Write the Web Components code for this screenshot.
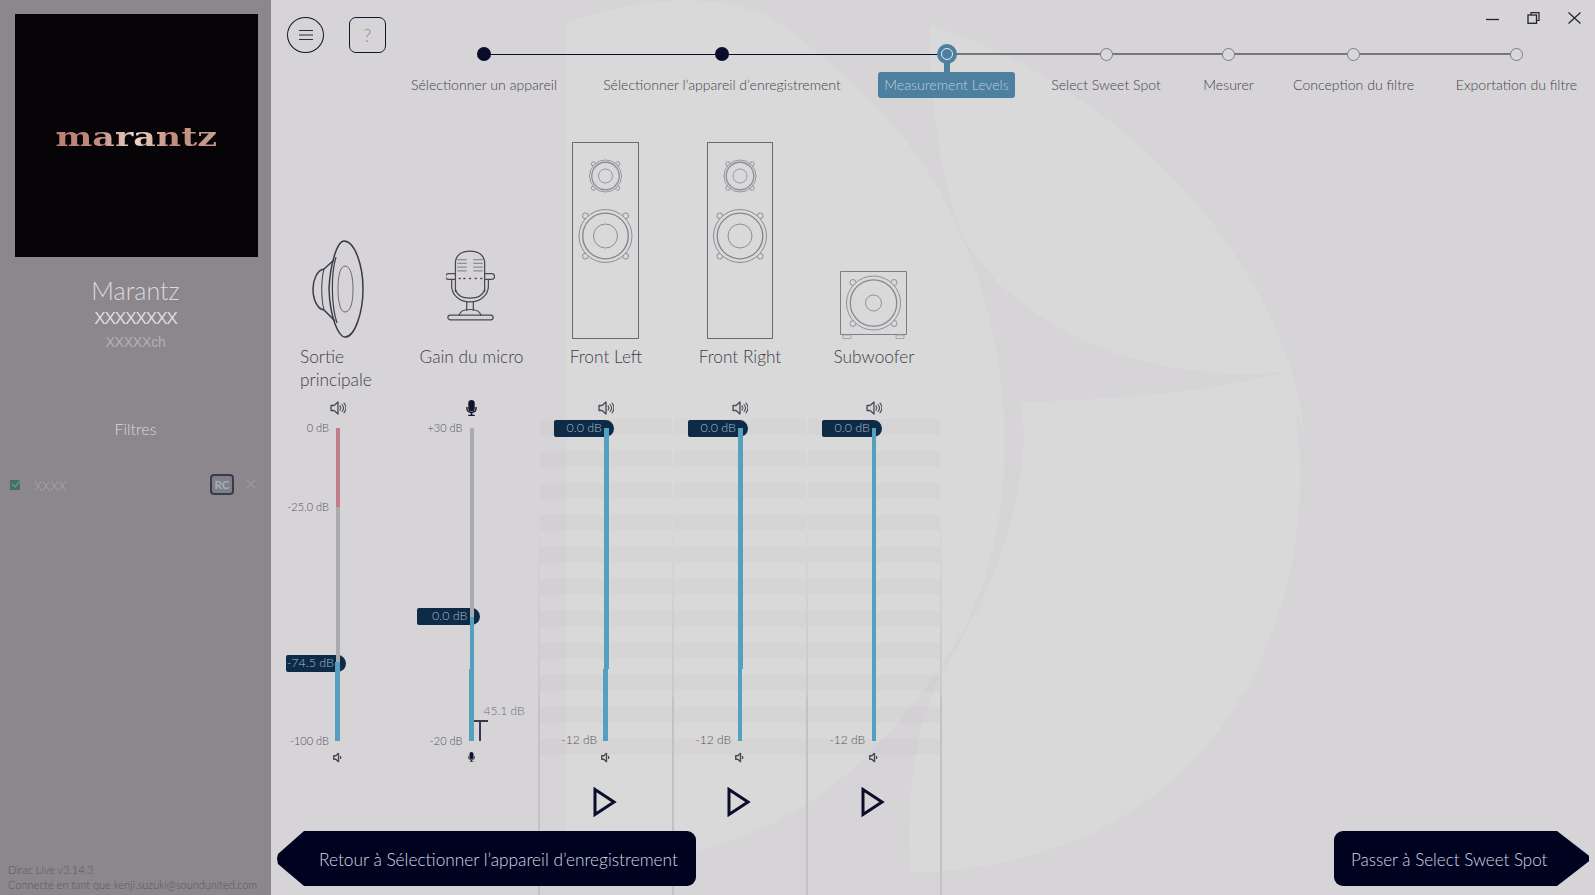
<!DOCTYPE html>
<html lang="fr"><head><meta charset="utf-8"><title>Dirac Live</title>
<style>
html,body{margin:0;padding:0;width:1595px;height:895px;overflow:hidden;background:#d6d4d7;font-family:Lato,"Noto Sans",sans-serif}
</style></head><body>
<dirac-app>
  <app-sidebar slot="side"></app-sidebar>
  <app-main slot="main">
    <app-header></app-header>
    <channel-row>
      <audio-channel kind="horn" label="Sortie principale" icon="spk" top="0 dB" bottom="-100 dB" mid="-25.0 dB" midpos="78.5" value="-74.5 dB" valpos="235" handlew="60"
        segs="#c07f88:78.5:0:4;#abaaad:155.5:0:4;#559fbf:79:-1:5"></audio-channel>
      <audio-channel kind="mic" label="Gain du micro" icon="mic" top="+30 dB" bottom="-20 dB" value="0.0 dB" valpos="188" handlew="63" meter="45.1 dB"
        segs="#abaaad:189:0:4;#559fbf:52:0:4;#559fbf:72:-1:5"></audio-channel>
      <audio-channel striped kind="tower" label="Front Left" icon="spk" bottom="-12 dB" big value="0.0 dB" valpos="0" handlew="60" play
        segs="#559fbf:241:0:4.5;#559fbf:72:-1:4.5"></audio-channel>
      <audio-channel striped kind="tower" label="Front Right" icon="spk" bottom="-12 dB" big value="0.0 dB" valpos="0" handlew="60" play
        segs="#559fbf:241:0:4.5;#559fbf:72:-.5:4.5"></audio-channel>
      <audio-channel striped last kind="sub" label="Subwoofer" icon="spk" bottom="-12 dB" big value="0.0 dB" valpos="0" handlew="60" play
        segs="#559fbf:313:0:4"></audio-channel>
    </channel-row>
    <nav-footer></nav-footer>
  </app-main>
</dirac-app>
<script>
const LABEL='Lato,"Noto Sans",sans-serif';
function def(name,cls){customElements.define(name,cls)}
function drv(cx,cy,r,ri,ears,col){
  let e='';
  if(ears) for(const [a,b] of [[-1,-1],[1,-1],[-1,1],[1,1]]){
    const x=cx+a*r*.76,y=cy+b*r*.76;
    e+=`<circle cx="${x}" cy="${y}" r="${r*.08+.8}"/>`;
  }
  return `<g fill="none" stroke="${col}" stroke-width=".9">${e}
  <circle cx="${cx}" cy="${cy}" r="${r}" fill="#d9d9d9"/><circle cx="${cx}" cy="${cy}" r="${r*.86}" stroke-width="1.3"/>
  <circle cx="${cx}" cy="${cy}" r="${ri}"/></g>`;
}
const ART={
 horn:()=>`<svg width="54" height="100" viewBox="0 0 54 100" style="display:block"><g fill="none" stroke="#3d3b4a" stroke-width="1.5" stroke-linejoin="round">
  <path d="M33 2C44 2 52 27 52 50C52 73 44 98 34 98C28 98 19 80 18 50C19 26 26 2 33 2Z"/>
  <path d="M25 18C20 34 20 66 26 84" stroke-width="1.2"/>
  <path d="M23 21L13 30C6 31 2 41 2 50C2 60 6 70 13 71L24 82" />
  <path d="M13 30C10 40 10 60 13 71" stroke-width="1"/>
  <path d="M34 27C40 27 42 39 42 50C42 62 40 73 34 73C29 73 27 62 27 50C27 38 29 27 34 27Z" stroke="#6c6a76" stroke-width="1"/></g></svg>`,
 mic:()=>`<svg width="49" height="76" viewBox="0 0 52 78" style="display:block;margin-bottom:16px;margin-right:2px"><g fill="none" stroke="#4a4856" stroke-width="1.3" stroke-linecap="round">
  <path d="M10 46V16C10 7 17 3 25.500 3C34 3 41 7 41 16V46"/><path d="M10 27H2.500a1.500 1.500 0 0 0 0 6H10M41 27H48.500a1.500 1.500 0 0 1 0 6H41"/>
  <path d="M6 33V40C6 50 15 57 25.500 57C36 57 45 50 45 40V33"/><path d="M10 44C12 50 18 53 25.500 53C33 53 39 50 41 44"/>
  <path d="M22 57V66M29 57V66"/><path d="M14 71C15 66 20 65 25.500 65C31 65 36 66 37 71"/>
  <rect x="2" y="71" width="48" height="5" rx="2.500"/>
  <path d="M12 12H22M29 12H39M12 16H22M29 16H39M12 20H22M29 20H39M12 24H22M29 24H39" stroke="#8d8b94" stroke-linecap="butt"/>
  <path d="M14 32h1M19 32h1M25 32h1M31 32h1M37 32h1" stroke-width="1.600"/></g></svg>`,
 tower:(w,mr)=>`<svg width="${w}" height="197" viewBox="0 0 ${w} 197" style="display:block;margin-right:${mr}px"><rect x=".5" y=".5" width="${w-1}" height="196" fill="none" stroke="#6c6a78" stroke-width="1"/>${drv(w/2,34,16,7,true,'#8f8d97')}${drv(w/2,94,26.5,12,true,'#84828c')}</svg>`,
 sub:()=>`<svg width="67" height="68" viewBox="0 0 67 68" style="display:block;margin-right:1px"><path d="M.5 .5H66.500V63.500H.5Z" fill="none" stroke="#7f7d89"/><path d="M3 64h8v3.500H3ZM56 64h8v3.500H56Z" fill="none" stroke="#9a98a2" stroke-width=".8"/>${drv(33.5,32,27,8,true,'#8a8892')}</svg>`
};
const SPK=(s,waves)=>`<svg width="${s}" height="${s}" viewBox="0 0 16 16" style="display:block"><path d="M1 5.500H4L8 2V14L4 10.500H1Z" fill="#d6d4d7" stroke="#4a4854" stroke-width="${waves?1.3:2}" stroke-linejoin="round"/>${waves?'<path d="M10 6C11 7 11 9 10 10M12 4.500C13.800 6.500 13.800 9.500 12 11.500M14 3C16.300 6 16.300 10 14 13" fill="none" stroke="#4a4854" stroke-width="1.100" stroke-linecap="round"/>':'<path d="M10.500 6C11.500 7 11.500 9 10.500 10" fill="none" stroke="#3c3a46" stroke-width="1.800"/>'}</svg>`;
const MIC=(s)=>`<svg width="${s}" height="${s*1.500}" viewBox="0 0 12 18" style="display:block"><rect x="2.500" y="0" width="7" height="12.500" rx="3.500" fill="#12142b"/><path d="M1 7.500V9C1 12 3 13.500 6 13.500C9 13.500 11 12 11 9V7.500" fill="none" stroke="#12142b" stroke-width="1.500"/><path d="M6 13.500V16M2.500 17H9.500" stroke="#12142b" stroke-width="1.800"/></svg>`;

def('level-fader',class extends HTMLElement{constructor(){super();this.attachShadow({mode:'open'})}
 build(){const g=a=>this.getAttribute(a);const big=this.hasAttribute('big');
 const segs=g('segs').split(';').map(s=>{const [c,h,l,w]=s.split(':');return `<i style="background:${c};height:${h}px;margin-left:${l}px;width:${w}px"></i>`}).join('');
 const hw=+g('handlew');
 this.shadowRoot.innerHTML=`<style>
 :host{display:block;position:relative;height:336px;font-family:${LABEL};}
 .bar{position:absolute;left:50%;margin-left:-2px;top:9px;width:4px;height:313px;display:flex;flex-direction:column;z-index:2}
 .bar i{display:block;flex:none}
 .sc{position:absolute;right:calc(50% + 9px);font:300 ${big?12:11}px/14px ${LABEL};color:#55535e;white-space:nowrap;transform:translateY(-50%)}
 .h{position:absolute;left:calc(50% + 8px - ${hw}px);width:${hw}px;height:17px;background:#0d2a47;border-radius:2px 9px 9px 2px;color:#a9bac9;font:300 12.500px/15px ${LABEL};box-sizing:border-box;z-index:1;white-space:nowrap;text-align:right;padding-right:12px}
 .m{position:absolute;left:calc(50% + 12px);top:${712-420}px;transform:translateY(-50%);font:300 12px/14px ${LABEL};color:#6c6a76;white-space:nowrap}
 .t{position:absolute;left:calc(50% + 0px);top:${721-420}px;width:17px;height:21px;}
 .t::before{content:"";position:absolute;left:0;top:0;width:16px;height:2px;background:#3a3850}
 .t::after{content:"";position:absolute;left:7px;top:0;width:2px;height:21px;background:#3a3850}
 </style>
 ${g('top')?`<div class="sc" style="top:9px">${g('top')}</div>`:''}
 ${g('mid')?`<div class="sc" style="top:${9+ +g('midpos')}px">${g('mid')}</div>`:''}
 ${g('bottom')?`<div class="sc" style="top:${big?321:322}px">${g('bottom')}</div>`:''}
 <div class="h" style="top:${+g('valpos')+1}px">${g('value')}</div>
 <div class="bar">${segs}</div>
 ${g('meter')?`<div class="m">${g('meter')}</div><div class="t"></div>`:''}`;
 }});

def('dirac-app',class extends HTMLElement{constructor(){super();this.attachShadow({mode:'open'}).innerHTML=`<style>
 :host{display:grid;grid-template-columns:271px 1fr;width:1595px;height:895px;position:relative;overflow:hidden}
 svg{position:absolute;left:0;top:0;z-index:0}
 ::slotted(*){position:relative;z-index:1}
 </style>
 <svg width="1595" height="895" viewBox="0 0 1595 895" fill="#d9d9d9" aria-hidden="true">
  <path d="M566 22C660 -8 740 -8 790 30C860 85 930 150 965 245C1012 350 1032 540 940 667C870 770 790 830 697 850C650 862 600 868 566 870Z"/>
  <path d="M930 25C1130 90 1290 270 1305 440L1285 372C1140 385 1012 325 962 235C940 180 930 100 930 25Z"/>
  <path d="M1285 372C1310 440 1305 560 1265 650C1215 770 1100 870 910 872C905 800 915 720 945 667C1000 585 1035 470 1020 402C1100 400 1200 395 1285 372Z"/>
 </svg><slot name="side"></slot><slot name="main"></slot>`}});

def('app-sidebar',class extends HTMLElement{constructor(){super();this.attachShadow({mode:'open'}).innerHTML=`<style>
 :host{display:flex;flex-direction:column;background:#8b878c;height:895px;color:#dbd9db;font-family:${LABEL};font-weight:300;box-sizing:border-box}
 .logo{margin:14px 13px 0 15px;height:243px;background:#060406;display:flex;align-items:center;justify-content:center}
 .mk{font:700 26px "DejaVu Serif",serif;transform:scaleX(1.34) translateY(1px);background:linear-gradient(90deg,#bb7f75,#c08a7e 25%,#ecd5c8 50%,#c28c80 72%,#c99c90);-webkit-background-clip:text;background-clip:text;color:transparent}
 .c{text-align:center}
 .n1{font-size:25px;line-height:30px;margin-top:18px}
 .n2{font-size:17px;line-height:22px;margin-top:3px;font-family:"Liberation Sans",sans-serif;letter-spacing:-1px;color:#dfdddf}
 .n3{font-size:14px;line-height:20px;margin-top:2px;color:#b4b1b4;font-family:"Liberation Sans",sans-serif;letter-spacing:-.2px}
 .f{font-size:16px;line-height:20px;margin-top:67px}
 .row{display:flex;align-items:center;margin:34px 0 0 10px;height:22px;width:247px}
 .x4{margin-left:12px;font-size:13px;color:#aaa6aa;margin-top:4px}
 .rc{margin-left:auto;width:20px;height:17px;border:2px solid #3c3a48;border-radius:4px;background:#7d808b;color:#a9aeb4;font:700 11.500px ${LABEL};display:flex;align-items:center;justify-content:center}
 .xx{margin-left:11px;width:12px;display:block}
 .foot{margin-top:auto;padding:0 0 3px 8px;font-size:11px;line-height:15px;color:#5a565b;letter-spacing:-.03px}
 </style>
 <div class="logo"><span class="mk">marantz</span></div>
 <div class="c n1">Marantz</div><div class="c n2">XXXXXXXX</div><div class="c n3">XXXXXch</div>
 <div class="c f">Filtres</div>
 <div class="row"><svg width="12" height="11" viewBox="0 0 12 11"><rect x="0" y="1" width="10" height="10" fill="#4b6c69"/><path d="M2 5L5 8L11 1" fill="none" stroke="#5d9b88" stroke-width="1.500"/></svg><span class="x4">XXXX</span><span class="rc">RC</span>
 <svg class="xx" width="12" height="12" viewBox="0 0 12 12"><path d="M1.500 1.500L10.500 10.500M10.500 1.500L1.500 10.500" stroke="#9b979b" stroke-width="1.400"/></svg></div>
 <div class="foot">Dirac Live v3.14.3<br>Connecté en tant que kenji.suzuki@soundunited.com</div>`}});

def('app-main',class extends HTMLElement{constructor(){super();this.attachShadow({mode:'open'}).innerHTML=`<style>
 :host{display:flex;flex-direction:column;height:895px;position:relative;overflow:hidden;color:#3a3846;font-family:${LABEL}}
 </style><slot></slot>`}});

def('app-header',class extends HTMLElement{constructor(){super();this.attachShadow({mode:'open'}).innerHTML=`<style>
 :host{display:flex;height:140px;flex:none;box-sizing:border-box}
 .tools{display:flex;gap:25px;padding:17px 0 0 16px;width:123px;box-sizing:content-box;align-items:flex-start}
 .b{width:37px;height:36px;box-sizing:border-box;border:1.600px solid #14142c;display:flex;align-items:center;justify-content:center;color:#8b8b92;font:300 18px ${LABEL}}
 .b.r{border-radius:50%}.b.s{border-radius:7px}
 .rt{display:flex;flex-direction:column}
 .win{height:44px;display:flex;justify-content:flex-end;align-items:flex-start;gap:28px;padding:12px 14px 0 0;box-sizing:border-box;width:1185px}
 .win svg{display:block}
 </style>
 <div class="tools"><div class="b r"><svg width="16" height="12" viewBox="0 0 16 12"><path d="M1 1.500H15M1 6H15M1 10.500H15" stroke="#2d2c3c" stroke-width="1.200"/></svg></div><div class="b s">?</div></div>
 <div class="rt"><div class="win">
  <svg width="13" height="12" viewBox="0 0 13 12"><path d="M0 7.500H13" stroke="#222230" stroke-width="1.300"/></svg>
  <svg width="13" height="12" viewBox="0 0 13 12"><path d="M4 3V.7H12V8.500H9.500" fill="none" stroke="#222230" stroke-width="1.200"/><rect x="1" y="3" width="8.500" height="8.300" fill="none" stroke="#222230" stroke-width="1.300"/></svg>
  <svg width="13" height="12" viewBox="0 0 13 12"><path d="M.5 .5L12.500 11.500M12.500 .5L.5 11.500" stroke="#222230" stroke-width="1.200"/></svg>
 </div>
 <step-track>
  <wizard-step w="148" gap="44" next="238.500" state="done">Sélectionner un appareil</wizard-step>
  <wizard-step w="240" gap="36" next="224" state="done">Sélectionner l’appareil d’enregistrement</wizard-step>
  <wizard-step w="137" gap="37" next="159.500" state="cur">Measurement Levels</wizard-step>
  <wizard-step w="108" gap="44" next="124" state="todo">Select Sweet Spot</wizard-step>
  <wizard-step w="49" gap="40" next="124" state="todo">Mesurer</wizard-step>
  <wizard-step w="121" gap="42" next="163" state="todo">Conception du filtre</wizard-step>
  <wizard-step w="121" state="todo">Exportation du filtre</wizard-step>
 </step-track></div>`}});

def('step-track',class extends HTMLElement{constructor(){super();this.attachShadow({mode:'open'}).innerHTML=`<style>:host{display:flex}</style><slot></slot>`}});

def('wizard-step',class extends HTMLElement{constructor(){super();const g=a=>this.getAttribute(a);const st=g('state');const nx=g('next');
 const lineCol=st==='done'?'#0c0c2a':'#79757d';const lh=st==='done'?1:1.500;
 this.attachShadow({mode:'open'}).innerHTML=`<style>
 :host{display:flex;flex-direction:column;align-items:center;position:relative;width:${g('w')}px;margin-right:${g('gap')||0}px;font:300 14.100px ${LABEL};color:#45434f;white-space:nowrap}
 .dotw{height:20px;display:flex;align-items:center;justify-content:center;position:relative;z-index:1}
 .done{width:14px;height:14px;border-radius:50%;background:#0b0b2b}
 .todo{width:13px;height:13px;border-radius:50%;box-sizing:border-box;border:1.500px solid #7f7b84;background:#d8d7d9}
 .cur{width:20px;height:20px;border-radius:50%;background:#4d7f9f;display:flex;align-items:center;justify-content:center}
 .cur i{display:block;width:12px;height:12px;border-radius:50%;border:1.500px solid #e6e8ea;box-sizing:border-box}
 .line{position:absolute;left:50%;top:${10-lh/2}px;height:${lh}px;width:${nx}px;background:${lineCol}}
 .stem{width:6px;height:9px;background:#4d7f9f;margin-top:-1px}
 .lab{height:26px;line-height:26px;margin-top:8px;text-align:center}
 .cur-lab{margin-top:0;background:#4d7f9f;color:#bcd0dc;border-radius:3px;padding:0 6px;height:26px;width:125px}
 </style>
 ${nx?'<div class="line"></div>':''}
 <div class="dotw"><div class="${st}">${st==='cur'?'<i></i>':''}</div></div>
 ${st==='cur'?'<div class="stem"></div>':''}
 <div class="lab ${st==='cur'?'cur-lab':''}"><slot></slot></div>`}});

def('channel-row',class extends HTMLElement{constructor(){super();this.attachShadow({mode:'open'}).innerHTML=`<style>:host{display:flex;flex:1;align-items:stretch}</style><slot></slot>`}});

def('audio-channel',class extends HTMLElement{constructor(){super();const g=a=>this.getAttribute(a);const h=a=>this.hasAttribute(a);
 const striped=h('striped');const kind=g('kind');const label=g('label');
 let art=kind==='horn'?ART.horn():kind==='mic'?ART.mic():kind==='sub'?ART.sub():label==='Front Left'?ART.tower(67,2):ART.tower(66,0);
 const idx=[...this.parentNode.children].indexOf(this);
 const w=idx===0?134:idx===1?133:134;
 this.attachShadow({mode:'open'}).innerHTML=`<style>
 :host{display:flex;flex-direction:column;align-items:stretch;width:${w}px;box-sizing:border-box;position:relative;${striped?'padding-left:2px;':''}}
 .rule{position:absolute;top:360px;bottom:0;width:2px;background:linear-gradient(#c6c5c800,#c9c8cb 50%,#c2c1c4 50.2%,#c2c1c4)}
 .rule.l{left:-.5px}.rule.r{right:-2px}
 .art{height:199px;display:flex;align-items:flex-end;justify-content:center}
 .lab{height:60px;box-sizing:border-box;padding-top:6px;font:300 17.300px/23px ${LABEL};color:#3f3d4b;display:flex;justify-content:center;text-align:left}
 .lab span{display:block;${kind==='horn'?'width:76px':'white-space:nowrap'}}
 .ico{height:20px;margin-top:-1px;margin-bottom:2px;display:flex;justify-content:center;align-items:center}
 .strip{height:336px;margin-top:-1px;${striped?'background:repeating-linear-gradient(rgba(170,150,165,.07) 0 16px,transparent 16px 32px);':''}}
 .low{height:20px;display:flex;justify-content:center;align-items:center;margin-top:-8px}
 .play{display:flex;justify-content:center;margin-top:20px;padding-right:2px}
 </style>
 ${striped?'<div class="rule l"></div>':''}${h('last')?'<div class="rule r"></div>':''}
 <div class="art">${art}</div>
 <div class="lab"><span>${label}</span></div>
 <div class="ico">${kind==='mic'?MIC(11):SPK(16,true)}</div>
 <div class="strip"><level-fader></level-fader></div>
 <div class="low">${kind==='mic'?MIC(7):SPK(11,false)}</div>
 ${h('play')?`<div class="play"><svg width="24" height="30" viewBox="0 0 24 30"><path d="M2 2.500L21 15L2 27.500Z" fill="none" stroke="#0b0d2b" stroke-width="3" stroke-linejoin="miter"/></svg></div>`:''}`;
 const f=this.shadowRoot.querySelector('level-fader');
 for(const a of ['top','bottom','mid','midpos','value','valpos','handlew','segs','meter','big'])if(h(a))f.setAttribute(a,g(a));
 f.build();
 }});

def('nav-footer',class extends HTMLElement{constructor(){super();this.attachShadow({mode:'open'}).innerHTML=`<style>
 :host{position:absolute;left:6px;right:6px;bottom:9px;display:flex;justify-content:space-between;z-index:3;font:300 17.300px/57px ${LABEL};color:#d6d8e2}
 .b{height:55px;background:#00031f;white-space:nowrap;box-sizing:border-box}
 .back{width:419px;padding-left:42px;border-radius:0 9px 9px 0;clip-path:polygon(27px 0,100% 0,100% 100%,27px 100%,1px 60%,0 50%,1px 42%)}
 .next{width:255px;padding-left:17px;border-radius:9px 0 0 9px;font-size:17px;clip-path:polygon(0 0,223px 0,100% 45%,100% 55%,223px 100%,0 100%)}
 </style><div class="b back">Retour à Sélectionner l’appareil d’enregistrement</div><div class="b next">Passer à Select Sweet Spot</div>`}});
</script>
</body></html>
